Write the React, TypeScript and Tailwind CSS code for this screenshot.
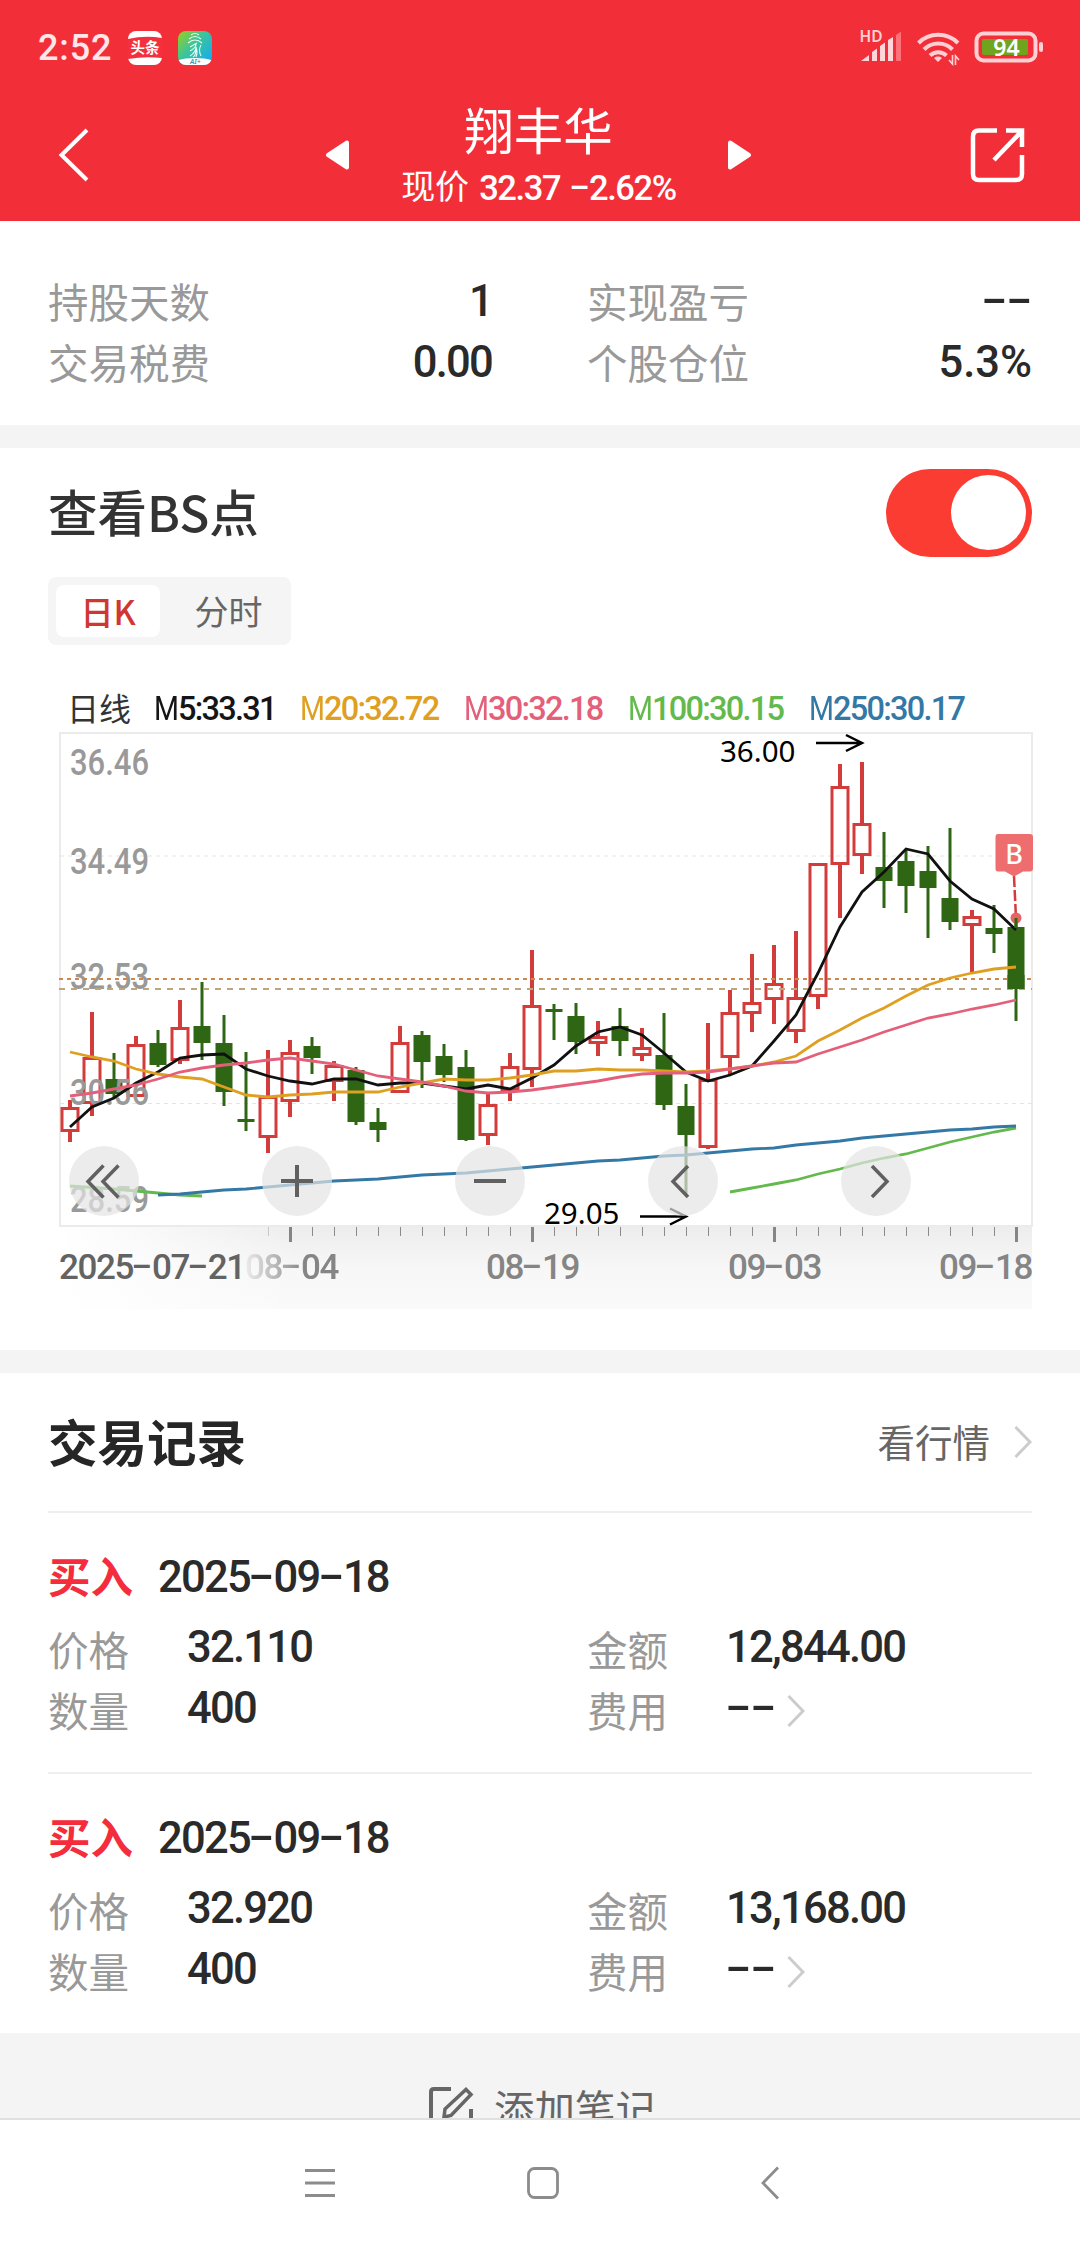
import { Fragment, type ReactNode } from "react";
import clsx from "clsx";

// [high, body top, body bottom, low, rising]
type Candle = [number, number, number, number, 0 | 1];

const CANDLES: Candle[] = [
  [1100, 1107, 1132, 1142, 1],
  [1012, 1057, 1104, 1116, 1],
  [1053, 1079, 1094, 1098, 0],
  [1036, 1044, 1097, 1097, 1],
  [1030, 1043, 1065, 1067, 0],
  [1000, 1027, 1061, 1064, 1],
  [982, 1026, 1043, 1060, 0],
  [1015, 1043, 1092, 1106, 0],
  [1052, 1119, 1122, 1131, 0],
  [1050, 1096, 1138, 1153, 1],
  [1040, 1052, 1102, 1117, 1],
  [1037, 1046, 1058, 1074, 0],
  [1061, 1065, 1082, 1101, 1],
  [1067, 1070, 1122, 1125, 0],
  [1108, 1122, 1130, 1142, 0],
  [1026, 1042, 1093, 1093, 1],
  [1031, 1035, 1062, 1088, 0],
  [1044, 1056, 1075, 1082, 0],
  [1050, 1067, 1140, 1141, 0],
  [1093, 1104, 1136, 1145, 1],
  [1053, 1066, 1091, 1101, 1],
  [950, 1005, 1070, 1087, 1],
  [1004, 1009, 1012, 1040, 0],
  [1003, 1016, 1042, 1054, 0],
  [1021, 1036, 1044, 1056, 1],
  [1008, 1026, 1041, 1056, 0],
  [1028, 1047, 1056, 1061, 1],
  [1013, 1055, 1105, 1110, 0],
  [1084, 1106, 1135, 1196, 0],
  [1023, 1079, 1148, 1149, 1],
  [990, 1012, 1058, 1075, 1],
  [954, 1002, 1014, 1032, 1],
  [945, 983, 1000, 1024, 1],
  [931, 997, 1032, 1043, 1],
  [863, 863, 997, 1009, 1],
  [764, 786, 865, 918, 1],
  [762, 823, 856, 874, 1],
  [832, 867, 881, 908, 0],
  [850, 861, 886, 913, 0],
  [846, 871, 888, 938, 0],
  [828, 898, 922, 930, 0],
  [910, 916, 926, 972, 1],
  [905, 928, 934, 953, 0],
  [918, 927, 989, 1021, 0],
];

const LINES: { color: string; start: number; ys: number[] }[] = [
  {
    color: "#63b94c",
    start: 0,
    ys: [1186, 1187.5, 1189, 1191, 1193, 1195, 1196],
  },
  {
    color: "#63b94c",
    start: 30,
    ys: [1192, 1188, 1184, 1180, 1174, 1169, 1163, 1158, 1154, 1148, 1142, 1137, 1132, 1128],
  },
  {
    color: "#3478a6",
    start: 4,
    ys: [
      1195, 1194, 1192, 1190, 1189, 1187, 1185, 1183, 1181, 1180, 1179, 1177, 1175, 1174, 1173, 1171, 1169,
      1167, 1165, 1163, 1161, 1160, 1158, 1156, 1155, 1153, 1151, 1149, 1148, 1145, 1143, 1141, 1138, 1136,
      1134, 1132, 1130, 1129, 1127, 1126,
    ],
  },
  {
    color: "#111111",
    start: 0,
    ys: [
      1127, 1107, 1098, 1083, 1072, 1058, 1055, 1054, 1069, 1076, 1081, 1084, 1079, 1079, 1085, 1083, 1083,
      1086, 1089, 1085, 1089, 1078, 1065, 1046, 1032, 1027, 1035, 1053, 1072, 1081, 1075, 1066, 1041, 1015,
      973, 927, 892, 872, 849, 854, 881, 899, 909, 930,
    ],
  },
  {
    color: "#dfa022",
    start: 0,
    ys: [
      1052, 1057, 1061, 1069, 1074, 1077, 1079, 1087, 1095, 1097, 1095, 1094, 1092, 1092, 1092, 1087, 1083,
      1079, 1080, 1080, 1078, 1075, 1071, 1071, 1069, 1070, 1070, 1071, 1072, 1071, 1069, 1066, 1062, 1056,
      1041, 1030, 1018, 1008, 996, 985, 978, 973, 969, 967,
    ],
  },
  {
    color: "#e4607a",
    start: 0,
    ys: [
      1096, 1093, 1089, 1085, 1079, 1072, 1068, 1065, 1063, 1060, 1058, 1061, 1064, 1070, 1076, 1079, 1082,
      1086, 1091, 1093, 1092, 1090, 1087, 1084, 1081, 1077, 1074, 1073, 1073, 1072, 1069, 1066, 1063, 1062,
      1054, 1047, 1040, 1032, 1025, 1018, 1014, 1009, 1005, 1000,
    ],
  },
];

const PRICE_LABELS = [
  { text: "36.46", y: 775 },
  { text: "34.49", y: 873.5 },
  { text: "32.53", y: 989 },
  { text: "30.56", y: 1105 },
  { text: "28.59", y: 1211.5 },
];

const LEGEND = [
  { rest: "5:33.31", className: "w-[146px] text-[#151515]" },
  { rest: "20:32.72", className: "w-[164px] text-[#dfa022]" },
  { rest: "30:32.18", className: "w-[164px] text-[#e4607a]" },
  { rest: "100:30.15", className: "w-[181px] text-[#63b94c]" },
  { rest: "250:30.17", className: "text-[#3478a6]" },
];

const TRADES = [
  { date: "2025-09-18", price: "32.110", amount: "12,844.00", count: "400", fee: "--" },
  { date: "2025-09-18", price: "32.920", amount: "13,168.00", count: "400", fee: "--" },
];

const cx = (i: number) => 70 + 22 * i;

// figures: narrow Roboto with hyphens stretched to a digit's width
function Num({ children, className }: { children: string; className?: string }) {
  const empty = children === "--";
  return (
    <span className={clsx("font-[Roboto] whitespace-nowrap tracking-[-0.04em]", className)}>
      {children.split("").map((c, i) =>
        c === "-" ? (
          <span key={i} className={clsx("inline-block text-center tracking-normal", empty ? "w-[0.58em]" : "w-[0.54em]")}>
            <span className="inline-block -translate-y-[0.05em] scale-x-[1.75]">-</span>
          </span>
        ) : (
          <Fragment key={i}>{c}</Fragment>
        )
      )}
    </span>
  );
}

function ChevronRight({ className }: { className?: string }) {
  return (
    <svg className={className} width="18" height="34" viewBox="0 0 18 34" fill="none" stroke="#cccccc" strokeWidth="3">
      <path d="M1.5 2 L16 17 L1.5 32" />
    </svg>
  );
}

function StatusBar() {
  return (
    <div className="flex h-[94px] items-center pt-0.5 pl-[38px] pr-9">
      <span className="w-[90px] font-[Roboto] text-[36px] font-medium leading-none tracking-[0.025em] text-[#ffe6e8]">2:52</span>
      <svg width="34" height="36" viewBox="0 0 34 36">
        <rect x="0" y="1" width="34" height="34" rx="8" fill="#ffffff" />
        <path d="M0 9 Q17 5 34 8 V28 Q17 26 0 29 Z" fill="#f5303c" />
        <text x="17" y="23" textAnchor="middle" fontSize="14.5" fontWeight="700" fill="#fff" fontFamily="Noto Sans CJK SC">
          头条
        </text>
      </svg>
      <svg className="ml-4" width="34" height="36" viewBox="0 0 34 36" fill="none">
        <defs>
          <linearGradient id="home" x1="0" y1="0" x2="1" y2="0.9">
            <stop offset="0" stopColor="#9ccf1c" />
            <stop offset="0.45" stopColor="#3cc59a" />
            <stop offset="1" stopColor="#12a9f5" />
          </linearGradient>
          <clipPath id="homeClip">
            <rect x="0" y="1" width="34" height="34" rx="8" />
          </clipPath>
        </defs>
        <g clipPath="url(#homeClip)">
          <rect y="1" width="34" height="34" fill="url(#home)" />
          <ellipse cx="17" cy="36" rx="24" ry="8" fill="#fff" />
        </g>
        <path
          d="M13 5 Q17 2 21 5 M11 9 Q17 4 23 9 M10 13 Q17 7 24 13 M12 17 L19 13 M12 21 Q18 18 18 14 M12 26 Q18 22 18 17 Q20 22 18 27 M23 15 Q20 20 23 26 M15 27 Q18 25 18 20"
          stroke="#e8fbf0"
          strokeWidth="1.1"
        />
        <text x="17.5" y="34" textAnchor="middle" fontSize="7" fontStyle="italic" fontWeight="600" fill="#2a9ab8" fontFamily="Noto Sans">
          AI+
        </text>
      </svg>
      <svg className="ml-auto" width="186" height="44" viewBox="859 26 186 44" fill="none">
        <text x="860.500" y="42" fontSize="15.5" fontWeight="600" fill="#ffd0d3" fontFamily="Noto Sans">
          HD
        </text>
        <path d="M862 61 L870 55 V61 Z M873 52 L878 48.500 V61 H873 Z M881 46 L886 42.500 V61 H881 Z M889 40 L894 37 V61 H889 Z" fill="#ffd6d9" />
        <path d="M897 35 L902 31.500 V61 H897 Z" fill="#ff7078" />
        <g stroke="#ffd0d3" strokeWidth="4">
          <path d="M919.500 43 A28 28 0 0 1 959 43" />
          <path d="M925 49.500 A20 20 0 0 1 953.500 49.500" />
          <path d="M931 55.500 A12 12 0 0 1 947.500 55.500" />
        </g>
        <path d="M939 62 l-4 -4 a6 5 0 0 1 8 0 Z" fill="#ffd0d3" />
        <path d="M950 60 l3.500 4 V55 M960 60 l-3.500 -4 V65" stroke="#ffd0d3" strokeWidth="1.600" />
        <rect x="977.500" y="33.500" width="59" height="27" rx="7" stroke="#ffd0d3" strokeWidth="4" />
        <rect x="983" y="39" width="46" height="16" rx="2" fill="#6fa51e" />
        <rect x="1040" y="42" width="4" height="10" rx="2" fill="#ffd0d3" />
        <text x="1007.500" y="55.500" textAnchor="middle" fontSize="23" fontWeight="600" fill="#ffffff" fontFamily="Noto Sans">
          94
        </text>
      </svg>
    </div>
  );
}

function TitleBar() {
  return (
    <div className="flex h-[127px] items-start px-[54px] text-white">
      <svg className="mt-8" width="40" height="58" viewBox="0 0 40 58" fill="none" stroke="#fff" strokeWidth="4">
        <path d="M33 4 L7.500 29 L33 54" />
      </svg>
      <svg className="mt-[46px] ml-[230px]" width="26" height="30" viewBox="0 0 26 30" fill="#fff" stroke="#fff" strokeWidth="4" strokeLinejoin="round">
        <path d="M4 15 L23 2.500 V27.500 Z" />
      </svg>
      <div className="flex w-[377px] flex-col items-center">
        <h1 className="mt-[9px] text-[49.5px] leading-[52px]">翔丰华</h1>
        <p className="mt-[13px] flex h-10 items-center text-[34px] leading-none whitespace-nowrap">
          <span className="relative -top-[3px] mr-2.5">现价</span>
          <Num className="mr-2.5 text-[34.5px] font-medium">32.37</Num>
          <Num className="text-[34.5px] font-medium">-2.62%</Num>
        </p>
      </div>
      <svg className="mt-[46px]" width="26" height="30" viewBox="0 0 26 30" fill="#fff" stroke="#fff" strokeWidth="4" strokeLinejoin="round">
        <path d="M22 15 L3 2.500 V27.500 Z" />
      </svg>
      <svg className="mt-[33px] ml-auto" width="56" height="56" viewBox="0 0 56 56" fill="none" stroke="#fff" strokeWidth="4.500">
        <path d="M27 3.500 H9 Q3 3.500 3 9.500 V47 Q3 53 9 53 H46 Q52 53 52 47 V28" />
        <path d="M36 3.500 H52 V20 M51 5 L24 33" />
      </svg>
    </div>
  );
}

function Stat({ label, value }: { label: string; value: string }) {
  return (
    <div className="flex h-[61px] items-center justify-between">
      <span className="relative -top-px text-[40.5px] text-[#999999]">{label}</span>
      <Num className={clsx("relative -top-px text-[43.5px] font-medium text-[#2a2a2a]", value.includes("%") && "tracking-[0em]")}>
        {value}
      </Num>
    </div>
  );
}

function Chart() {
  return (
    <svg className="block" width="1080" height="496" viewBox="0 731 1080 496" fill="none">
      <rect x="60" y="733" width="972" height="493" stroke="#ebebeb" strokeWidth="2" />
      <path d="M60 856 H1032 M60 1103.500 H1032" stroke="#e4e4e4" strokeWidth="1.200" strokeDasharray="4 4" />

      {CANDLES.map(([hi, top, bottom, lo, up], i) =>
        up ? (
          <g key={i} stroke="#d23d3b" strokeWidth="3">
            <path d={`M${cx(i)} ${hi} V${top} M${cx(i)} ${bottom} V${lo}`} strokeWidth="4" />
            <rect x={cx(i) - 8} y={top + 1.5} width="16" height={bottom - top - 3} />
          </g>
        ) : (
          <g key={i} fill="#2f6614">
            <rect x={cx(i) - 1.5} y={hi} width="3" height={lo - hi} />
            <rect x={cx(i) - 8.5} y={top} width="17" height={bottom - top} />
          </g>
        )
      )}

      {PRICE_LABELS.map((l) => (
        <text key={l.text} x="70" y={l.y} textLength="79" fontSize="36" fontWeight="500" fill="#999999" fontFamily="Roboto" lengthAdjust="spacingAndGlyphs">
          {l.text}
        </text>
      ))}

      <path d="M59 979 H1032" stroke="#cf8748" strokeWidth="2" strokeDasharray="4 4" />
      <path d="M59 989 H1032" stroke="#bfa57c" strokeWidth="2" strokeDasharray="6 6" />
      <rect x="1007.500" y="975" width="17" height="14" fill="#2f6614" />

      {LINES.map((l, n) => (
        <polyline key={n} points={l.ys.map((y, i) => `${cx(l.start + i)},${y}`).join(" ")} stroke={l.color} strokeWidth="2.800" />
      ))}

      {/* high and low marks */}
      <g fill="#000000" fontSize="29.500" fontFamily="Noto Sans">
        <text x="720" y="762">36.00</text>
        <text x="544" y="1224">29.05</text>
      </g>
      <g stroke="#000000" strokeWidth="2.500">
        <path d="M816 743 H862 M846 735 L862 743 L846 751" />
        <path d="M640 1216.500 H686 M670 1208.500 L686 1216.500 L670 1224.500" />
      </g>

      {/* buy point */}
      <path d="M1014 876 L1016 918" stroke="#d63a3b" strokeWidth="2.500" strokeDasharray="11 3" />
      <circle cx="1016" cy="918" r="5.500" fill="#e56466" />
      <rect x="1014.500" y="918" width="3" height="10" fill="#2f6614" />
      <path d="M998 834 H1030 Q1033 834 1033 837 V868.500 Q1033 871.500 1030 871.500 H1023 L1014 876.500 L1005 871.500 H998 Q995.500 871.500 995.500 868.500 V837 Q995.500 834 998 834 Z" fill="#ee6e70" />
      <text x="1014" y="863.500" textAnchor="middle" fontSize="27" fontWeight="500" fill="#fff" fontFamily="Noto Sans">
        B
      </text>

      {/* pan and zoom controls */}
      <g fill="#e4e4e4" fillOpacity="0.7">
        {[104, 297, 490, 683, 876].map((x) => (
          <circle key={x} cx={x} cy="1181" r="35" />
        ))}
      </g>
      <g stroke="#606060" strokeWidth="4">
        <path d="M103.500 1165.500 L88 1181.500 L103.500 1197.500 M118.500 1165.500 L103 1181.500 L118.500 1197.500" strokeWidth="3.500" />
        <path d="M281 1181 H313 M297 1165 V1197" />
        <path d="M474 1181 H506" />
        <path d="M688 1166 L673 1181.500 L688 1197" strokeWidth="3.500" />
        <path d="M872 1166 L887 1181.500 L872 1197" strokeWidth="3.500" />
      </g>
    </svg>
  );
}

function Axis() {
  return (
    <div className="relative mr-12 h-[82px] bg-linear-to-b from-[#ededed] via-[#f7f7f7] via-50% to-[#fafafa]">
      <div className="absolute inset-y-0 left-0 w-[300px] bg-linear-to-r from-white from-20% to-white/0" />
      <svg className="absolute top-0 left-0" width="1032" height="16" viewBox="0 0 1032 16">
        {CANDLES.map((_, i) =>
          i < 9 ? null : i % 11 === 10 ? (
            <rect key={i} x={cx(i) - 1} y="0" width="3" height="15" fill="#858585" />
          ) : (
            <rect key={i} x={cx(i)} y="0" width="1" height="9" fill={i === 9 ? "#c8c8c8" : "#8a8a8a"} />
          )
        )}
      </svg>
      <div className="relative flex pt-[23px] pl-[59px] text-[35px] leading-[35px] font-medium text-[#858585]">
        <Num className="w-[186px] text-[#636363]">2025-07-21</Num>
        <Num className="w-[241px] [mask-image:linear-gradient(to_right,rgba(0,0,0,0.1),black_60px)]">08-04</Num>
        <Num className="w-[242px]">08-19</Num>
        <Num className="w-[211px]">09-03</Num>
        <Num>09-18</Num>
      </div>
    </div>
  );
}

function Field({ label, value, children }: { label: string; value: string; children?: ReactNode }) {
  return (
    <div className="flex h-[61px] items-center">
      <span className="relative -top-px w-[139px] shrink-0 text-[40.5px] text-[#999999]">{label}</span>
      <Num className="relative -top-[3px] text-[43.5px] font-medium text-[#2a2a2a]">{value}</Num>
      {children}
    </div>
  );
}

function Trade({ trade }: { trade: (typeof TRADES)[number] }) {
  return (
    <div className="mx-12 h-[261px] border-t-2 border-[#efefef] pt-[37px]">
      <div className="flex h-[60px] items-center">
        <span className="relative -top-[5px] w-[110px] text-[42.5px] font-bold text-[#f42c3c]">买入</span>
        <Num className="relative -top-0.5 text-[43.5px] font-medium text-[#2a2a2a]">{trade.date}</Num>
      </div>
      <div className="mt-[10px] grid grid-cols-[539px_1fr]">
        <Field label="价格" value={trade.price} />
        <Field label="金额" value={trade.amount} />
        <Field label="数量" value={trade.count} />
        <Field label="费用" value={trade.fee}>
          <ChevronRight className="relative -top-px ml-[11px]" />
        </Field>
      </div>
    </div>
  );
}

export default function App() {
  return (
    <div className="flex h-[2248px] w-[1080px] flex-col overflow-hidden bg-white font-['Noto_Sans_CJK_SC',sans-serif] leading-none">
      <header className="h-[221px] shrink-0 bg-[#f22f38]">
        <StatusBar />
        <TitleBar />
      </header>

      <section className="grid h-[204px] shrink-0 grid-cols-[444px_445px] content-start gap-x-[95px] pt-[51px] pl-12">
        <Stat label="持股天数" value="1" />
        <Stat label="实现盈亏" value="--" />
        <Stat label="交易税费" value="0.00" />
        <Stat label="个股仓位" value="5.3%" />
      </section>

      <div className="h-[23px] shrink-0 bg-[#f4f4f4]" />

      <section className="h-[902px] shrink-0">
        <div className="flex h-[129px] items-center justify-between px-12">
          <h2 className="relative -top-[2px] text-[49.5px] font-medium text-[#333333]">查看BS点</h2>
          <button className="flex h-[88px] w-[146px] items-center justify-end rounded-full bg-[#fb3c33] pr-1.5">
            <span className="size-[75px] rounded-full bg-white" />
          </button>
        </div>
        <div className="ml-12 flex h-[68px] w-[243px] items-center rounded-lg bg-[#f5f5f5] px-2 text-[33.5px]">
          <button className="h-[52px] w-[104px] rounded-lg bg-white font-medium text-[#cf3733]">日K</button>
          <button className="h-[52px] flex-1 pl-[14px] text-[34px] text-[#666666]">分时</button>
        </div>
        <div className="flex h-[86px] items-end pb-[5px] pl-[67px]">
          <span className="relative -top-px w-[87px] text-[32px] leading-[36px] text-[#333333]">日线</span>
          {LEGEND.map((l) => (
            <span key={l.rest} className={clsx("font-[Roboto] text-[32.5px] leading-[34px] font-medium tracking-[-1.75px]", l.className)}>
              <span className="inline-block w-[24px] origin-left scale-x-[0.88] font-normal">M</span>
              {l.rest}
            </span>
          ))}
        </div>
        <Chart />
        <Axis />
      </section>

      <div className="h-[23px] shrink-0 bg-[#f4f4f4]" />

      <section className="h-[660px] shrink-0">
        <div className="flex h-[138px] items-center px-12">
          <h2 className="relative -top-px text-[49.5px] font-bold text-[#262626]">交易记录</h2>
          <span className="relative -top-px mr-6 ml-auto text-[37.5px] text-[#666666]">看行情</span>
          <ChevronRight />
        </div>
        {TRADES.map((t) => (
          <Trade key={t.price} trade={t} />
        ))}
      </section>

      <div className="flex h-[85px] shrink-0 justify-center overflow-hidden bg-[#f4f4f4] pl-1 text-[#666666]">
        <svg className="mt-[52px] mr-5 shrink-0" width="46" height="46" viewBox="0 0 46 46" fill="none" stroke="#666666" strokeWidth="4">
          <path d="M23 4 H6 Q3 4 3 7 V41 Q3 44 6 44 H40 Q43 44 43 41 V24" />
          <path d="M16 32 L17 24 L38 4.500 L43 9.500 L23 30.500 Z" strokeWidth="3.500" />
        </svg>
        <span className="mt-[51px] text-[40.5px] leading-[48px]">添加笔记</span>
      </div>

      <nav className="h-[130px] shrink-0 border-t-2 border-[#e0e0e0] bg-white">
        <svg width="1080" height="126" viewBox="0 2120 1080 126" fill="none" stroke="#8c8c8c" strokeWidth="2.800">
          <path d="M305 2170.500 H335 M305 2183 H335 M305 2195.500 H335" />
          <rect x="528.500" y="2168.500" width="29" height="29" rx="6" />
          <path d="M778 2167.500 L763 2183 L778 2198.500" />
        </svg>
      </nav>
    </div>
  );
}
